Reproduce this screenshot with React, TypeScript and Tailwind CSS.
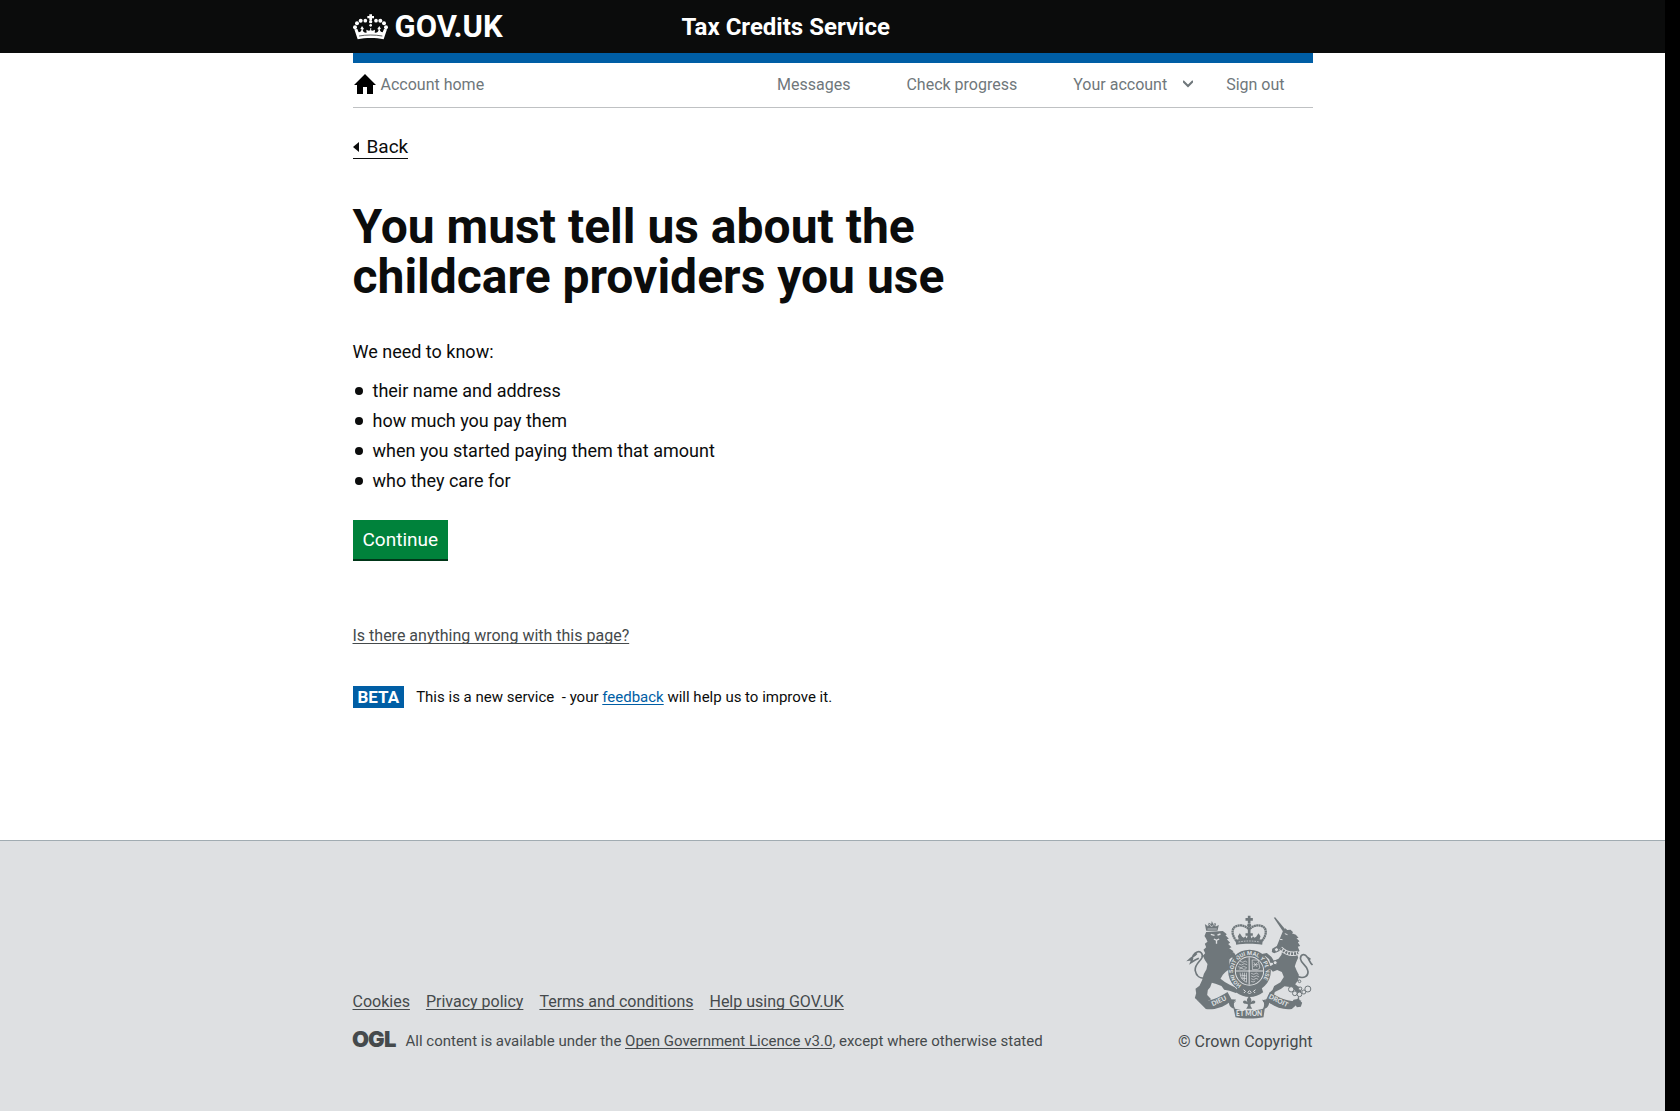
import React from "react";

const INK = "#6f777b";
const PAPER = "#dee0e2";

function CrownLogo() {
  return (
    <svg viewBox="39 38 105 78" className="h-[26px] w-[35px]" fill="#fff" aria-hidden="true">
      <path d="M88 39h8v5h6v7h-6v6h-8v-6h-6v-7h6z" />
      <circle cx="92" cy="61" r="5" />
      <circle cx="76" cy="58" r="5.5" />
      <circle cx="62" cy="58" r="6" />
      <circle cx="51" cy="66" r="6" />
      <circle cx="45" cy="78" r="6" />
      <circle cx="108" cy="58" r="5.5" />
      <circle cx="121" cy="58" r="6" />
      <circle cx="132" cy="66" r="6" />
      <circle cx="138" cy="78" r="6" />
      <circle cx="92" cy="72" r="4" />
      <path d="M43 84l9-1 4 10c5 0 8-3 9-9l-4-1 5-9 6 9-4 2c1 6 4 9 10 9l7-1-5 4-1-12 7 3 5-1-1-6h4l-1 6 5 1 7-3-1 12-5-4 7 1c6 0 9-3 10-9l-4-2 6-9 5 9-4 1c1 6 4 9 9 9l4-10 9 1-10 30c-24-5-54-5-78 0z" />
      <path d="M57 104c22-4 48-4 70 0" fill="none" stroke="#0b0c0c" strokeWidth="2" />
    </svg>
  );
}

function OglLogo() {
  return (
    <svg viewBox="0 -4 43 26" className="h-[26px] w-[43px] shrink-0 overflow-visible" fill="#454a4c" role="img" aria-label="OGL">
      <g fontFamily="Inter, sans-serif" fontWeight="900" fontSize="22">
        <text x="-1" y="15">O</text>
        <text x="15" y="15">G</text>
        <text x="31" y="15">L</text>
      </g>
    </svg>
  );
}

function RoyalArms() {
  return (
    <svg viewBox="78 45 380 312" className="h-[104px] w-[127px]" fill={INK} aria-hidden="true">
      <defs>
        <path id="garter" d="M244 255a48 48 0 1 1 48 0" />
      </defs>

      <path d="M263 47h8v7h7v8h-7v8h-8v-8h-7v-8h7z" />
      <circle cx="267" cy="76" r="6" />
      <path d="M229 123c-17-20-16-43 5-46 13-3 26 3 33 12 7-9 20-15 33-12 21 3 22 26 5 46" fill="none" stroke={INK} strokeWidth="7" strokeDasharray="6 1" />
      <path d="M263 82h8v38h-8z" />
      <path d="M226 120c24-6 58-6 82 0l-2 14c-24-4-54-4-78 0z" />
      <path d="M236 119l-3-10 6-9 7 10 5 3 5-4 4 8zM298 119l3-10-6-9-7 10-5 3-5-4-4 8zM256 100h22v7h-7l5 13h-18l5-13h-7z" />
      <path d="M235 126c22-4 42-4 64 0" stroke={PAPER} strokeWidth="2" strokeDasharray="5 3" fill="none" />

      <circle cx="268" cy="213" r="54" fill="none" stroke={INK} strokeWidth="20" />
      <circle cx="268" cy="213" r="41" />
      <path d="M267 172v82M227 213h82" stroke={PAPER} strokeWidth="3" />
      <g fill="none" stroke={PAPER} strokeWidth="2">
        <path d="M240 184l8 3 7-4 6 4M236 192l8 3 8-4 9 3M234 200l9 3 7-4 10 4M237 207l8-2 6 3 8-2" />
        <path d="M276 180h18l5 24-7 5h-15zM281 187l10 14M292 187l-12 14M280 194h14" />
        <path d="M240 218c0 14 7 24 20 29M247 218l2 20M253 218v24M259 218v28M240 225l20 3M243 234l17 2" />
        <path d="M273 220l8 3 7-4 7 4M273 228l8 3 8-4 8 4M273 236l7 3 8-4 6 3M273 244l6 2 6-3" />
      </g>
      <path d="M232 262c22 17 50 17 72 0l5 15c-24 19-57 19-82 0z" />
      <path d="M250 269l6 5-5 5M268 272l5 5-5 5-5-5zM286 269l-6 5 5 5" fill="none" stroke={PAPER} strokeWidth="3" />
      <text fill={PAPER} fontFamily="Roboto, sans-serif" fontWeight="700" fontSize="17">
        <textPath href="#garter">HONI SOIT QUI MAL Y PENSE</textPath>
      </text>

      <path d="M138 92l-4-20 8 6 4-10 7 4 2-9 4 9 7-3 2 10 8-4-4 17z" />
      <path d="M141 78l8-5 5 8 7-8 7 6M142 87h28" fill="none" stroke={PAPER} strokeWidth="2" />
      <path d="M138 96L188 93 200 103 196 106 206 116 200 118 210 128 204 132 214 142 207 145 220 154 210 162 220 168 208 178 207 208 196 216 188 224 181 236 194 246 210 255 224 262 234 272 227 279 208 272 192 269 184 258 166 251 155 248 150 262 143 270 141 285 153 298 138 305 113 302 104 294 108 280 106 266 118 257 126 240 131 222 139 208 142 192 134 180 128 167 135 160 130 149 138 142 134 131 142 125 138 116 133 108z" />
      <path d="M152 103l11 3M172 105l9-3M161 117l8 4 8-4M169 122v9" fill="none" stroke={PAPER} strokeWidth="4" />
      <path d="M206 152l16 6 8 14-4 6-12-6" fill={INK} />
      <path d="M137 234c-17 3-29-6-32-23-2-17 15-27 20-37 5-12-4-22-14-18-10 4-15 16-16 26M110 160c-7 8-16 12-24 20l10-2-4 10 13-8 11-5" fill="none" stroke={INK} strokeWidth="5" />

      <path d="M341 53l4-1 30 36-6 7z" />
      <path d="M368 94l8-9 5 5 10-1 8 8-4 3 12 4 8 9-6 2 9 9-5 3 7 11-7 2 5 13-8 5 4 15-6 14-4 12 6 14 6 11-2 17-9 12 8 6 12 4-2 13-8 12 3 12 8 8-4 12-12 2-5-9-9-6 4-8 12-2 3-13-12-13-14-10-16-2-11 8-18 9-4 13-12 8-5-7 7-14 7-6 5-12 19-11 10-16-6-15-14-6-13 5-7-8-14 5-5-5 6-7 15-3 11-8-14-1-3-10-12-10-13 4 3-10 15-3 14 12 7 11 14-6 9-12 2-13-10 3-14 6-7-4 1-10 14-8z" />
      <path d="M374 101l8 3M359 118l8 1" fill="none" stroke={PAPER} strokeWidth="3" />
      <path d="M361 145c18 16 36 20 53 13" fill="none" stroke={PAPER} strokeWidth="13" />
      <path d="M361 145c18 16 36 20 53 13" fill="none" stroke={INK} strokeWidth="8" strokeDasharray="6 3" />
      <path d="M410 229c22 9 36-1 33-17-2-16-20-20-22-35-1-14 12-18 20-6 8 10 6 15 16 24M438 169l13 9" fill="none" stroke={INK} strokeWidth="5" />
      <g fill={PAPER} stroke={INK} strokeWidth="3">
        <circle cx="349" cy="149" r="6" />
        <circle cx="345" cy="188" r="6" />
        <circle cx="393" cy="268" r="8" />
        <circle cx="404" cy="280" r="7" />
        <circle cx="418" cy="283" r="7" />
        <circle cx="431" cy="276" r="6" />
        <circle cx="443" cy="267" r="9" />
        <circle cx="420" cy="266" r="5" />
        <circle cx="418" cy="244" r="4" />
      </g>

      <path d="M111 301c26 7 58-3 91-25l13 24 13-2c-8 6-9 17-4 28-10-1-17-7-18-18-19 15-46 22-69 19z" />
      <path d="M424 301c-28 9-62-3-95-25l-12 25-12-2c8 6 9 17 3 28 11-1 18-8 19-19 20 15 44 22 68 19z" />
      <path d="M220 325c27 9 65 9 94 0l-4 27c-24 5-60 5-84 0z" />
      <path d="M206 306c4-8 14-8 20-3-9 7-8 14-3 23M329 306c-4-8-14-8-20-3 9 7 8 14 3 23" fill="none" stroke={INK} strokeWidth="3" />
      <path d="M267 289c6 6 9 12 5 18 3-6 10-8 13-3 2 5-3 9-8 7l-6 2v5l5 8h-18l5-8v-5l-6-2c-5 2-10-2-8-7 3-5 10-3 13 3-4-6-1-12 5-18z" />
      <g fill={PAPER} fontFamily="Lato, sans-serif" fontWeight="900" fontSize="20" textAnchor="middle">
        <text transform="translate(179 309) rotate(-25)">DIEU</text>
        <text x="267" y="349">ET MON</text>
        <text transform="translate(352 308) rotate(26)">DROIT</text>
      </g>
    </svg>
  );
}

const needs = [
  "their name and address",
  "how much you pay them",
  "when you started paying them that amount",
  "who they care for",
];

const footerLinks = ["Cookies", "Privacy policy", "Terms and conditions", "Help using GOV.UK"];

const underlined = "underline underline-offset-2 decoration-1 [text-decoration-skip-ink:none]";

export default function App() {
  return (
    <div className="flex min-h-screen bg-black pr-[15px] font-['Roboto',sans-serif] text-[#0b0c0c]">
      <div className="flex min-w-0 flex-1 flex-col bg-white">
        <header className="bg-[#0b0c0c] text-white">
          <div className="mx-auto flex h-[53px] max-w-[960px] items-center">
            <a href="#" className="flex w-[329px] items-center gap-[7px] text-[31px] leading-8 font-bold">
              <CrownLogo />
              GOV.UK
            </a>
            <a href="#" className="text-2xl font-bold">Tax Credits Service</a>
          </div>
        </header>

        <main className="mx-auto w-full max-w-[960px]">
          <nav className="flex h-[55px] items-center justify-between border-t-10 border-b border-t-[#005ea5] border-b-[#bfc1c3] pr-7 text-[16px] text-[#6f777b]">
            <a href="#" className="flex items-center gap-1">
              <svg viewBox="0 0 24 22" className="h-[22px] w-6" aria-hidden="true">
                <path d="M12 0L1 11h3v9h6v-7h4v7h6v-9h3z" fill="#000" />
              </svg>
              Account home
            </a>
            <div className="flex items-center gap-14">
              <a href="#">Messages</a>
              <a href="#">Check progress</a>
              <div className="flex items-center gap-[33px]">
                <button type="button" className="flex items-center gap-4">
                  Your account
                  <svg viewBox="0 0 10 10" className="size-[10px]" fill="none" stroke="#6f777b" strokeWidth="2" aria-hidden="true">
                    <path d="M0 1l5 5 5-5" />
                  </svg>
                </button>
                <a href="#">Sign out</a>
              </div>
            </div>
          </nav>

          <a href="#" className="mt-[26px] inline-flex items-center gap-2 border-b border-current pt-px text-[19px] leading-[23px]">
            <svg viewBox="0 0 6 10" className="h-[10px] w-[6px]" aria-hidden="true">
              <path d="M6 0v10L0 5z" fill="#0b0c0c" />
            </svg>
            Back
          </a>

          <h1 className="mt-[43px] max-w-[630px] text-[48px] leading-[50px] font-bold">
            You must tell us about the childcare providers you use
          </h1>

          <p className="mt-[37px] text-[18px] leading-[25px]">We need to know:</p>
          <ul className="mt-3 text-[18px] leading-[30px]">
            {needs.map((need) => (
              <li key={need} className="flex items-center gap-[10px] pl-[2px]">
                <span className="size-2 rounded-full bg-[#0b0c0c]" />
                {need}
              </li>
            ))}
          </ul>

          <button type="button" className="mt-6 block h-[41px] border-b-2 border-[#003618] bg-[#00823b] px-[10px] pt-[2px] text-[19px] text-white">
            Continue
          </button>

          <div className="mt-[64px] text-[16px] leading-[22px] text-[#454a4c]">
            <a href="#" className={underlined}>Is there anything wrong with this page?</a>
          </div>

          <div className="mt-[39px] mb-[132px] flex items-center gap-3 text-[15px] leading-[22px]">
            <strong className="bg-[#005ea5] px-[5px] text-[17px] text-white">BETA</strong>
            <span>
              This is a new service &nbsp;- your{" "}
              <a href="#" className="text-[#005ea5] underline decoration-1 underline-offset-2">feedback</a> will help us to improve it.
            </span>
          </div>
        </main>

        <footer className="flex-1 border-t border-[#a1acb2] bg-[#dee0e2] text-[#454a4c]">
          <div className="mx-auto flex max-w-[960px] items-end justify-between pt-[74px] pb-14 text-[16px] leading-5">
            <div>
              <ul className="flex gap-4">
                {footerLinks.map((label) => (
                  <li key={label}>
                    <a href="#" className={underlined}>{label}</a>
                  </li>
                ))}
              </ul>
              <div className="mt-4 flex items-center gap-[10px] text-[15px]">
                <OglLogo />
                <p>
                  All content is available under the{" "}
                  <a href="#" className={underlined}>Open Government Licence v3.0</a>, except where otherwise stated
                </p>
              </div>
            </div>
            <a href="#" className="flex flex-col items-end gap-[13px] pb-[2px]">
              <RoyalArms />
              © Crown Copyright
            </a>
          </div>
        </footer>
      </div>
    </div>
  );
}
